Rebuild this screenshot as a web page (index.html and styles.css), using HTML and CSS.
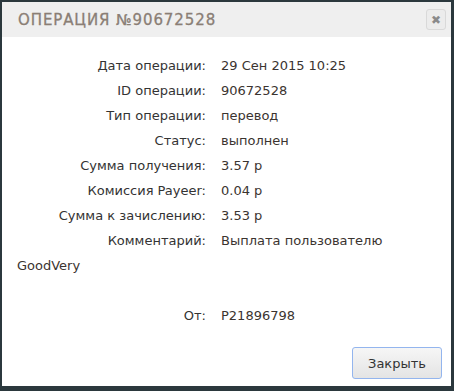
FILE: index.html
```html
<html lang="ru">
<head>
    <meta charset="UTF-8">
    <title>Операция</title>
    <link rel="stylesheet" href="styles.css">
</head>
<body>
<div class="dialog">
    <div class="dialog-head">
        <span class="dialog-title">Операция №90672528</span>
        <span class="close-btn">&#10006;</span>
    </div>

    <div class="dialog-body">
        <div class="row"><span class="label">Дата операции:</span><span class="value">29 Сен 2015 10:25</span></div>
        <div class="row"><span class="label">ID операции:</span><span class="value">90672528</span></div>
        <div class="row"><span class="label">Тип операции:</span><span class="value">перевод</span></div>
        <div class="row"><span class="label">Статус:</span><span class="value">выполнен</span></div>
        <div class="row"><span class="label">Сумма получения:</span><span class="value">3.57 р</span></div>
        <div class="row"><span class="label">Комиссия Payeer:</span><span class="value">0.04 р</span></div>
        <div class="row"><span class="label">Сумма к зачислению:</span><span class="value">3.53 р</span></div>
        <div class="row"><span class="label">Комментарий:</span><span class="value">Выплата пользователю</span></div>
        <div class="row value">GoodVery</div>
        <div class="row empty"></div>
        <div class="row"><span class="label">От:</span><span class="value">P21896798</span></div>
    </div>

    <div class="dialog-foot">
        <button class="btn-close">Закрыть</button>
    </div>
</div>
</body>
</html>
```

FILE: styles.css
```css
body {
    margin: 0;
    padding: 0;
    background-color: #2b383d;
    font-family: "DejaVu Sans", sans-serif;
}

.dialog {
    margin: 2px 3px 0 2px;
    width: 449px;
    height: 384px;
    background-color: white;
    display: flex;
    flex-direction: column;
}

.dialog-head {
    height: 35px;
    background-color: #efefef;
    display: flex;
    align-items: center;
    justify-content: space-between;
    padding: 0 5px 0 16px;
}

.dialog-title {
    text-transform: uppercase;
    font-size: 15px;
    letter-spacing: 0.9px;
    color: #8a7e75;
    -webkit-text-stroke: 0.3px #8a7e75;
}

.close-btn {
    width: 18px;
    height: 19px;
    border: 1px solid #d9d9d9;
    border-radius: 3px;
    background-color: #ececec;
    color: #8a8a8a;
    font-size: 12px;
    font-weight: bold;
    display: flex;
    align-items: center;
    justify-content: center;
}

.dialog-body {
    flex: 1;
    padding: 16px 15px 0 15px;
    font-size: 13px;
    color: #333;
}

.row {
    line-height: 25px;
}

.empty {
    height: 25px;
}

.label {
    display: inline-block;
    width: 189px;
    text-align: right;
    margin-right: 15px;
}

.value {
    color: #3b3430;
}

.dialog-foot {
    display: flex;
    justify-content: flex-end;
    padding: 0 9px 7px 0;
}

.btn-close {
    width: 90px;
    height: 32px;
    border: 1px solid #93b5ee;
    border-radius: 3px;
    background: linear-gradient(#f6f6f6, #e4e4e4);
    font-family: "DejaVu Sans", sans-serif;
    font-size: 13px;
    color: #333;
}
```
